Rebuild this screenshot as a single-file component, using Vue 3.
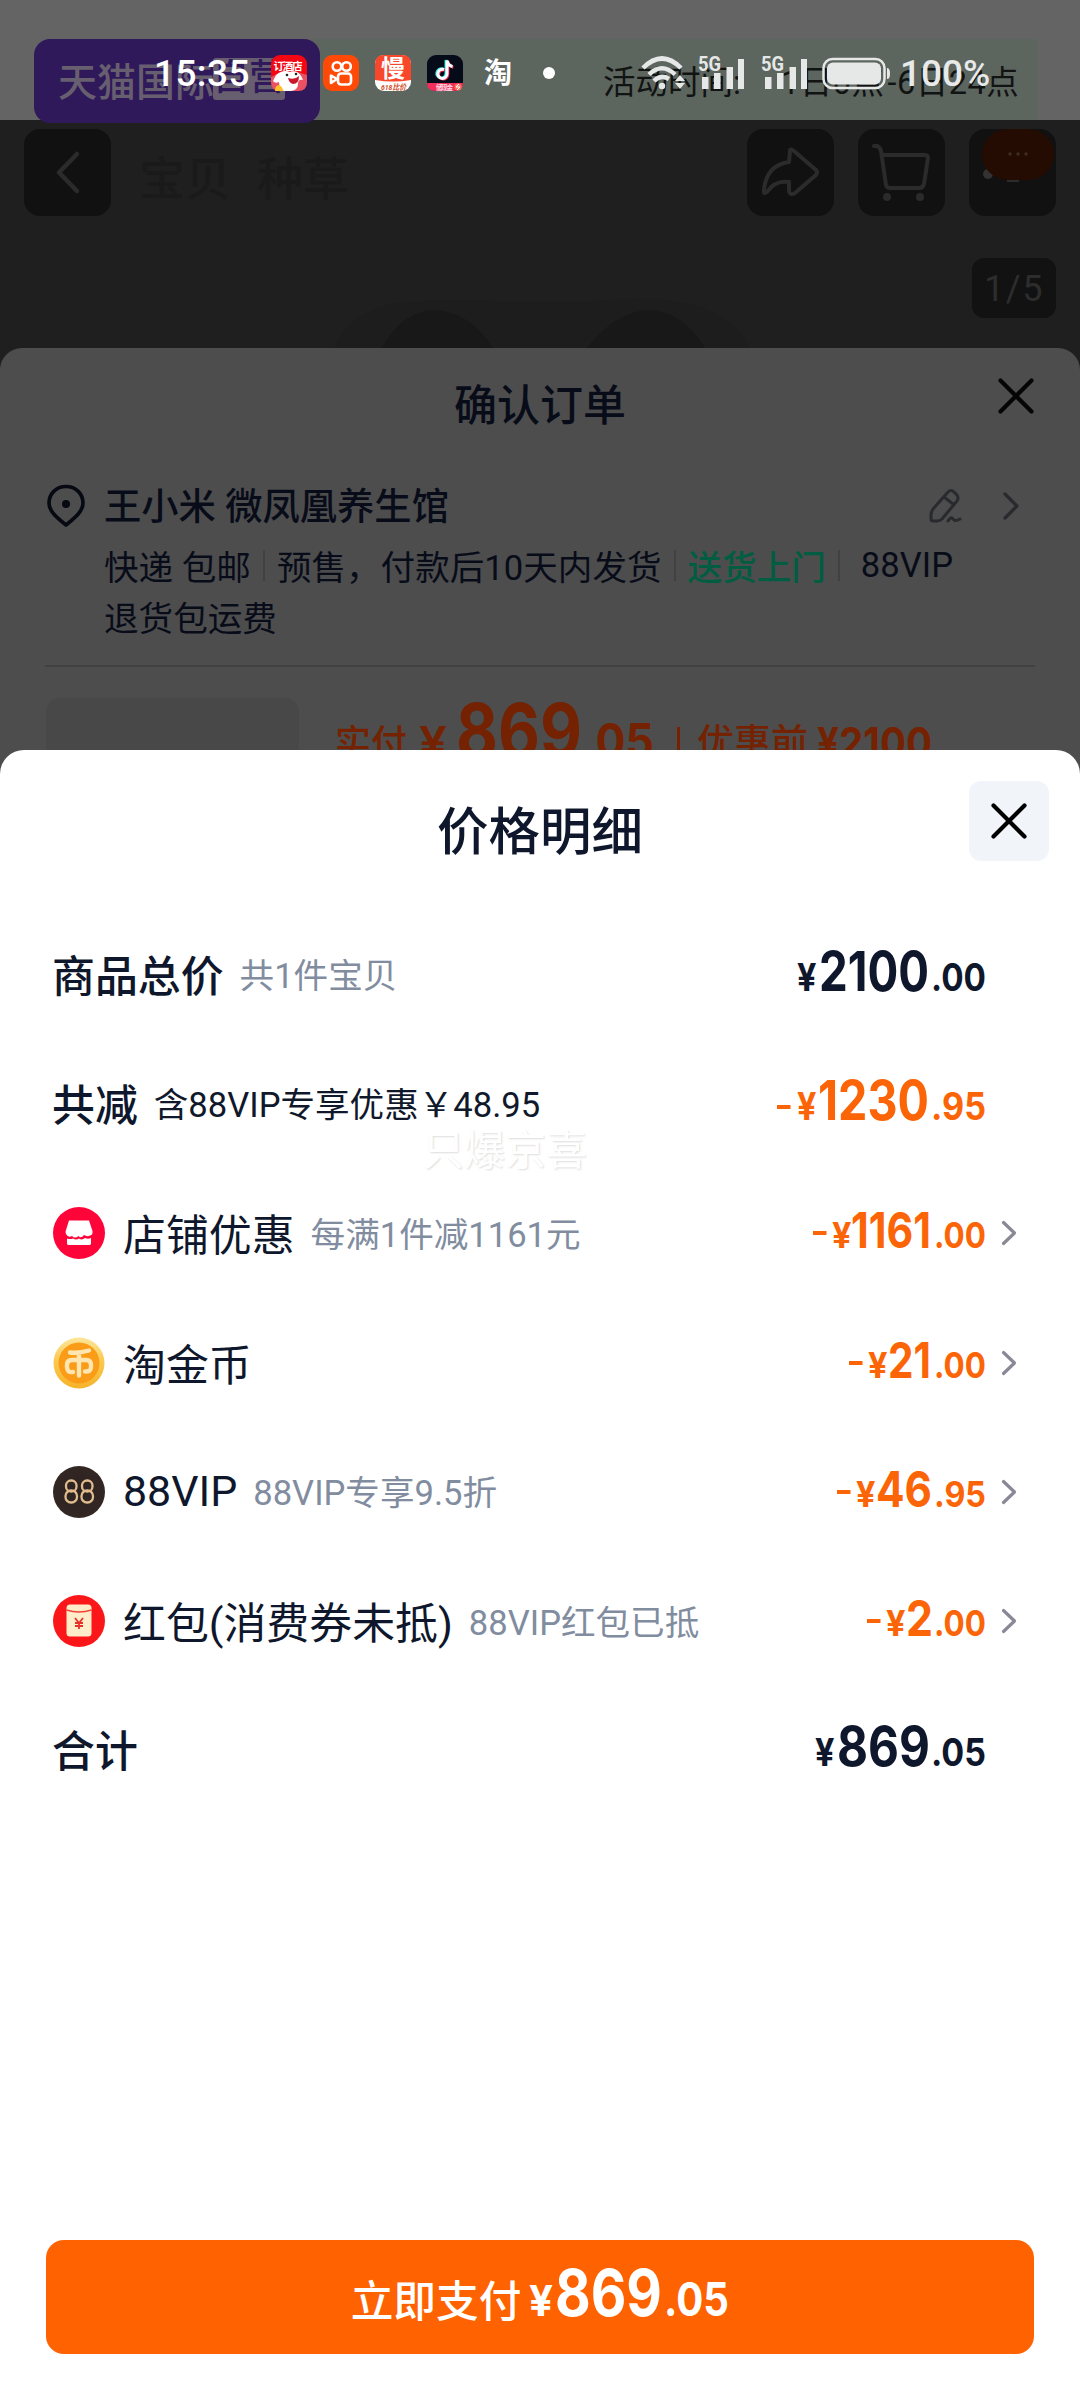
<script setup>
const rows = [
  { label: '商品总价', note: '共1件宝贝', strong: true, big: true, parts: { yen: 48, int: ['2100', 69, 110], dec: '.00' } },
  { label: '共减', note: '含88VIP专享优惠￥48.95', strong: true, dark: true, big: true, orange: true, parts: { minus: 27, yen: 48, int: ['1230', 68, 111], dec: '.95' } },
  { icon: 'shop', label: '店铺优惠', note: '每满1件减1161元', orange: true, arrow: true, parts: { minus: 63, yen: 83, int: ['1161', 101, 80], dec: '.00' } },
  { icon: 'coin', label: '淘金币', note: '', orange: true, arrow: true, parts: { minus: 99, yen: 119, int: ['21', 138, 43], dec: '.00' } },
  { icon: 'vip', label: '88VIP', note: '88VIP专享9.5折', orange: true, arrow: true, parts: { minus: 87, yen: 107, int: ['46', 126, 56], dec: '.95' } },
  { icon: 'red', label: '红包(消费券未抵)', note: '88VIP红包已抵', orange: true, arrow: true, parts: { minus: 117, yen: 137, int: ['2', 156, 27], dec: '.00' } },
  { label: '合计', note: '', strong: true, big: true, parts: { yen: 66, int: ['869', 87, 93], dec: '.05' } },
]
</script>

<template>
  <div class="screen">
    <div class="banner">
      <div class="brand"><span>天猫国际</span><b>自营</b></div>
      <div class="period"><span>活动时间:</span><span class="p1">1日0点</span><span class="p2">-6日24点</span></div>
    </div>
    <div class="product">
      <div class="nav">
        <div class="navbtn">
          <svg width="87" height="87"><path d="M53 25 35 43.500 53 62" fill="none" stroke="#2b2b2b" stroke-width="4.500" stroke-linecap="round" stroke-linejoin="round" /></svg>
        </div>
        <div class="tabs"><span>宝贝</span><span>种草</span></div>
        <div class="navbtn">
          <svg width="87" height="87"><path d="M43 22Q43 19 47 22L69 41Q71 43 69 46L48 64Q43 67 42 62V53Q28 51 20 63Q16 66 17 60Q20 36 42 33Z" fill="none" stroke="#2b2b2b" stroke-width="4" stroke-linejoin="round" /></svg>
        </div>
        <div class="navbtn">
          <svg width="87" height="87"><g fill="none" stroke="#2b2b2b" stroke-width="4" stroke-linecap="round" stroke-linejoin="round"><path d="M16 17H19Q22 18 23 22L28 56Q29 59 32 59H61Q65 59 66 55L70 29Q70 26 66 26H25" /></g><circle cx="29" cy="68" r="4" fill="#2b2b2b" /><circle cx="62" cy="68" r="4" fill="#2b2b2b" /></svg>
        </div>
        <div class="navbtn">
          <svg width="87" height="87"><circle cx="19" cy="45" r="5" fill="#333" /><path d="M38 51h12v2h-12z" fill="#2c2c2c" /><rect x="13" y="0" width="72" height="51" rx="25.500" fill="#240c03" /><g fill="#3f2c25"><circle cx="41" cy="25" r="1.700" /><circle cx="49" cy="25" r="1.700" /><circle cx="57" cy="25" r="1.700" /></g></svg>
        </div>
      </div>
      <div class="counter">1/5</div>
      <svg class="photo" width="440" height="52">
        <path d="M10 52Q22 18 70 7Q120 2 170 5H270Q330 -1 370 9Q415 24 425 52Z" fill="#1d1d1d" />
        <path d="M57 52Q78 14 110 14Q145 16 168 52ZM262 52Q292 14 326 14Q358 16 380 52Z" fill="#181818" />
      </svg>
    </div>

    <div class="statusbar">
      <div class="st-left">
        <span class="time">15:35</span>
        <svg class="app" viewBox="0 0 36 36"><rect width="36" height="36" rx="9" fill="#f30713" /><path d="M0 22Q18 12 36 20V27Q36 36 27 36H9Q0 36 0 27Z" fill="#ea5264" /><text x="2.500" y="14.500" font-size="10.500" font-weight="700" fill="#fff" textLength="29">订酒店</text><path d="M5 20Q12 14 19 17Q28 14 32 25Q27 24 27 29Q27 35 20 36H13Q8 34 8 27Q4 29 2 26Z" fill="#fff" /><path d="M17 23Q24 25 28 21Q28 29 22 29Q18 28 17 23Z" fill="#c9182b" /><circle cx="16" cy="20" r="1.300" fill="#222" /><circle cx="25" cy="19" r="1.300" fill="#222" /><path d="M4 36Q4 30 8 30Q12 32 12 36Z" fill="#ffbf27" /></svg>
        <svg class="app" viewBox="0 0 36 36"><rect width="36" height="36" rx="9" fill="#ff4906" /><g fill="none" stroke="#fff" stroke-width="2.600"><circle cx="14" cy="11.500" r="4.300" /><circle cx="23.500" cy="11.500" r="4.300" /><rect x="15" y="18.500" width="13" height="11" rx="3" /><path d="M14 24 8 20.500V28Z" stroke-linejoin="round" /></g></svg>
        <svg class="app" viewBox="0 0 36 36"><rect width="36" height="36" rx="9" fill="#fff" /><path d="M0 25V9Q0 0 9 0H27Q36 0 36 9V25Q18 28 0 25Z" fill="#f8472b" /><text x="6" y="22" font-size="24" font-weight="700" fill="#fff">慢</text><text x="6" y="34.500" font-size="8" font-weight="700" font-style="italic" fill="#d04a22" textLength="25" lengthAdjust="spacingAndGlyphs">618比价</text></svg>
        <svg class="app" viewBox="0 0 36 36"><rect width="36" height="36" rx="9" fill="#050b18" /><g fill="none" stroke-width="3"><path d="M17 14.500a4.600 4.600 0 1 0 3 4.300V5.500q1 5 5.500 6" stroke="#27e6e2" transform="translate(-1 -.5)" /><path d="M17 14.500a4.600 4.600 0 1 0 3 4.300V5.500q1 5 5.500 6" stroke="#fb2a59" transform="translate(.8 .7)" /><path d="M17 14.500a4.600 4.600 0 1 0 3 4.300V5.500q1 5 5.500 6" stroke="#fff" /></g><path d="M0 28H36Q36 36 27 36H9Q0 36 0 28Z" fill="#f32e5d" /><text x="9" y="35" font-size="6.500" font-weight="700" fill="#ffd9e0" textLength="17">储现金</text><circle cx="31" cy="32" r="3.500" fill="#ff765f" /><path d="m32 29-3 3h4l-3 3" stroke="#fff" fill="none" /></svg>
        <span class="tao">淘</span>
        <i class="dot"></i>
      </div>
      <div class="st-right">
        <svg width="46" height="36" viewBox="0 0 46 36"><g fill="none" stroke="#e6e8e7" stroke-width="4.500"><path d="M2 13Q21 -6 40 13" /><path d="M8 19.500Q21 7 34 19.500" /><path d="M13 26Q20 19 28 24" /></g><circle cx="21" cy="31" r="3.200" fill="#e6e8e7" /><path d="m39 20 5 6H34ZM39 34l5-6H34Z" fill="#e6e8e7" /></svg>
        <svg v-for="n in 2" :key="n" class="signal" width="50" height="36" viewBox="0 0 50 36"><text x="0" y="16" font-size="21" font-weight="700" fill="#e6e8e7" textLength="23" lengthAdjust="spacingAndGlyphs">5G</text><path d="M4 22h6.500v12H4zM16 18h6.500v16H16zM28.500 12H35v22h-6.500zM40 4h6v30h-6z" fill="#e6e8e7" /></svg>
        <svg class="battery" width="70" height="36" viewBox="0 0 70 36"><rect x="1.500" y="4" width="61" height="29" rx="9" fill="none" stroke="#e6e8e7" stroke-width="2.500" /><rect x="5" y="7.500" width="54" height="22" rx="6" fill="#e6e8e7" /><path d="M65 13q3 0 3 5.500t-3 5.500z" fill="#e6e8e7" /></svg>
        <span class="pct">100%</span>
      </div>
    </div>

    <section class="order">
      <header class="order-head">
        <h2>确认订单</h2>
        <svg class="order-close" width="40" height="40"><path d="M4.500 4.500 35.500 35.500M35.500 4.500 4.500 35.500" stroke="#050505" stroke-width="4.200" stroke-linecap="round" /></svg>
      </header>
      <div class="address">
        <svg width="40" height="44"><path d="M20 2.500C10 2.500 3 10 3 19C3 27 10 33 20 41C30 33 37 27 37 19C37 10 30 2.500 20 2.500Z" fill="none" stroke="#060812" stroke-width="3.600" stroke-linejoin="round" /><circle cx="20" cy="20" r="4" fill="#060812" /></svg>
        <span class="who">王小米 微凤凰养生馆</span>
        <svg class="pen" width="34" height="36"><g fill="none" stroke="#292a2e" stroke-width="3" stroke-linejoin="round" stroke-linecap="round"><path d="M19 4Q22 1 25 4L28 7Q30 10 28 13L13 31Q11 33 8 33H4Q2 33 2 31V27Q2 24 4 21ZM15 9 24 16" /><path d="M19 33Q22 28 24 31T31 31" /></g></svg>
        <svg width="20" height="30"><path d="M4 3 16 15 4 27" fill="none" stroke="#292a2e" stroke-width="3.200" stroke-linecap="round" stroke-linejoin="round" /></svg>
      </div>
      <div class="ship"><span>快递 包邮</span><i></i><span>预售，付款后10天内发货</span><i class="i2"></i><b>送货上门</b><i class="i3"></i><span class="v">88VIP</span></div>
      <div class="ship second">退货包运费</div>
      <hr />
      <div class="goods">
        <div class="thumb"></div>
        <svg class="paid" width="640" height="70">
          <g fill="#742202" font-weight="500">
            <text x="9" y="58" font-size="36">实付</text>
            <text x="93" y="60" font-size="44" font-weight="600" class="din" textLength="28" lengthAdjust="spacingAndGlyphs">¥</text>
            <text x="130" y="60" font-size="75" font-weight="700" class="din" textLength="126" lengthAdjust="spacingAndGlyphs">869</text>
            <text x="256" y="60" font-size="48" font-weight="700" class="din" textLength="72" lengthAdjust="spacingAndGlyphs">.05</text>
            <path d="M351 29h3v38h-3z" />
            <text x="371" y="58" font-size="37">优惠前</text>
            <text x="491" y="60" font-size="43" font-weight="700" class="din" textLength="115" lengthAdjust="spacingAndGlyphs">¥2100</text>
          </g>
        </svg>
      </div>
    </section>

    <section class="detail">
      <header class="detail-head">
        <h1>价格明细</h1>
        <button><svg width="40" height="40"><path d="M4.500 4.500 35.500 35.500M35.500 4.500 4.500 35.500" stroke="#000" stroke-width="4.200" stroke-linecap="round" /></svg></button>
      </header>
      <ul>
        <li v-for="r in rows" :key="r.label">
          <svg v-if="r.icon === 'shop'" class="icon" viewBox="0 0 52 52"><circle cx="26" cy="26" r="26" fill="#ff0438" /><path d="M16 13.500H36L39.500 24Q40 28 37 28.500Q34 30 31 28Q28 32 25.500 29Q22 32 19 29Q15 31 13 27Q12 25 13 23Z" fill="#fff" /><path d="M14 31.500Q17 32.500 20 31.500Q23 33.500 26 31.500Q29 33.500 32 31Q35 32.500 38 31V36.500Q38 38 36 38H16Q14 38 14 36.500Z" fill="#fff" /></svg>
          <svg v-else-if="r.icon === 'coin'" class="icon" viewBox="0 0 52 52"><defs><linearGradient id="rim" x2="0" y2="1"><stop stop-color="#fde69a" /><stop offset=".45" stop-color="#fbc94f" /><stop offset="1" stop-color="#f6b32b" /></linearGradient></defs><circle cx="26" cy="26" r="25.500" fill="url(#rim)" /><circle cx="26" cy="26" r="20.500" fill="#fa9c18" /><g fill="none" stroke="#ffe5b0" stroke-width="4.400" stroke-linecap="round" stroke-linejoin="round"><path d="M17 15.500Q26 16.500 36 13.500M26 16V38.500M20 35Q14 36 14 30V28Q14 23 19 23H33Q38 23 38 28V30Q38 35 32 34.500" /></g></svg>
          <svg v-else-if="r.icon === 'vip'" class="icon" viewBox="0 0 52 52"><defs><radialGradient id="dark"><stop stop-color="#2a2120" /><stop offset="1" stop-color="#332724" /></radialGradient></defs><circle cx="26" cy="26" r="26" fill="url(#dark)" /><g fill="none" stroke="#dfbb8d" stroke-width="2.300"><rect x="13" y="14.500" width="10.500" height="11" rx="5" /><rect x="12.500" y="24.500" width="11.500" height="12" rx="5.500" /><rect x="29" y="14.500" width="10.500" height="11" rx="5" /><rect x="28.500" y="24.500" width="11.500" height="12" rx="5.500" /></g></svg>
          <svg v-else-if="r.icon === 'red'" class="icon" viewBox="0 0 52 52"><circle cx="26" cy="26" r="26" fill="#fb1719" /><rect x="13.500" y="9.500" width="25" height="32" rx="3.500" fill="#ffecc8" /><path d="M13.500 15Q26 19 38.500 15" fill="none" stroke="#f04436" stroke-width="1.400" /><path d="m22 23 4 5 4-5M26 28v6M22 28h8M22 31h8" stroke="#e5332a" stroke-width="1.800" fill="none" /></svg>
          <span class="label" :class="{ strong: r.strong }">{{ r.label }}</span>
          <span class="note" :class="{ dark: r.dark }">{{ r.note }}</span>
          <svg class="price" :class="{ orange: r.orange }" width="240" height="70">
            <rect v-if="r.parts.minus" :x="r.parts.minus" :y="r.big ? 36 : 33" width="13.500" height="4" />
            <text :x="r.parts.yen - 1" :y="r.big ? 51 : 49.500" :font-size="r.big ? 38 : 36" font-weight="700" textLength="19.500" lengthAdjust="spacingAndGlyphs">¥</text>
            <text :x="r.parts.int[1]" :y="r.big ? 51 : 49.500" :font-size="r.big ? 55 : 50" font-weight="700" :textLength="r.parts.int[2]" lengthAdjust="spacingAndGlyphs">{{ r.parts.int[0] }}</text>
            <text :x="r.big ? 181 : 184" :y="r.big ? 51 : 49.500" :font-size="r.big ? 38 : 36" font-weight="700" :textLength="r.big ? 55 : 52" lengthAdjust="spacingAndGlyphs">{{ r.parts.dec }}</text>
          </svg>
          <svg class="chev" width="20" height="30"><path v-if="r.arrow" d="M3.500 4.500 14.500 15 3.500 25.500" fill="none" stroke="#888995" stroke-width="3.200" stroke-linecap="round" stroke-linejoin="round" /></svg>
        </li>
      </ul>
      <button class="pay">
        <span>立即支付</span>
        <svg width="208" height="70">
          <g fill="#fff"><text x="8" y="54" font-size="43" font-weight="700" textLength="24" lengthAdjust="spacingAndGlyphs">¥</text>
          <text x="34" y="54" font-size="64" font-weight="700" textLength="107" lengthAdjust="spacingAndGlyphs">869</text>
          <text x="143" y="54" font-size="46" font-weight="700" textLength="65" lengthAdjust="spacingAndGlyphs">.05</text></g>
        </svg>
      </button>
      <span class="watermark">只爆京喜</span>
    </section>
  </div>
</template>

<style>
body { margin: 0; background: #1f1f1f; }
</style>

<style scoped>
* { box-sizing: border-box; }
.screen { position: relative; width: 1080px; height: 2400px; overflow: hidden; background: #1f1f1f; font-family: Roboto, "Noto Sans CJK SC", sans-serif; }
svg { display: block; flex: none; overflow: visible; }
h1, h2, ul { margin: 0; padding: 0; }
button { border: 0; padding: 0; font-family: inherit; }
.banner { height: 120px; padding: 39px 43px 0 34px; display: flex; background: #646464; }
.brand { width: 286px; height: 84px; flex: none; border-radius: 16px; background: #30195a; display: flex; align-items: center; padding: 0 0 4px 24px; font-size: 39px; font-weight: 500; color: #675f70; position: relative; z-index: 1; }
.brand b { font-weight: 500; background: #675f70; color: #30195a; height: 42px; line-height: 40px; font-size: 36px; border-radius: 3px; }
.brand span { width: 155px; white-space: nowrap; }
.period { flex: 1; margin-left: -10px; height: 81px; background: #5d655f; padding: 0 0 0 293px; display: flex; align-items: center; font-size: 32.500px; color: #111412; white-space: nowrap; }
.p1 { margin-left: 40px; letter-spacing: .5px; }
.p2 { margin-left: 3px; letter-spacing: .5px; }
.product { height: 228px; display: flex; flex-direction: column; }
.nav { display: flex; align-items: center; padding: 9px 24px 0; gap: 24px; }
.navbtn { width: 87px; height: 87px; border-radius: 16px; background: #111; flex: none; }
.tabs { flex: 1; display: flex; gap: 26px; padding: 12px 0 0 4px; line-height: 68px; font-size: 46px; font-weight: 500; color: #1a1a1a; }
.counter { align-self: flex-end; width: 84px; height: 60px; margin: 42px 24px 0 0; border-radius: 12px; background: #121212; color: #2d2d2d; font-size: 36px; line-height: 63px; text-align: center; letter-spacing: 1.500px; }
.photo { margin: -22px 0 0 325px; }
.statusbar { position: absolute; inset: 0 0 auto 0; height: 120px; padding: 26px 90px 0 154px; display: flex; justify-content: space-between; align-items: center; z-index: 2; }
.st-left, .st-right { display: flex; align-items: center; }
.time { font-size: 37px; font-weight: 500; color: #fff; width: 101px; letter-spacing: .4px; }
.app { width: 36px; height: 36px; margin-left: 16px; }
.tao { margin: -5px 0 0 21px; font-size: 28px; font-weight: 700; color: #fff; }
.dot { width: 12px; height: 12px; border-radius: 6px; background: #fff; margin-left: 31px; }
.signal { margin-left: 11px; }
.signal + .signal { margin-left: 13px; }
.battery { margin-left: 11px; }
.pct { margin-left: 8px; font-size: 37px; font-weight: 500; color: #e8eae9; width: 90px; }
.order { position: absolute; inset: 348px 0 0 0; background: #4d4d4d; border-radius: 22px 22px 0 0; color: #080c19; z-index: 3; }
.order-head { display: flex; justify-content: center; height: 114px; padding-top: 26px; position: relative; }
.order-head h2 { font-size: 43px; font-weight: 500; line-height: 64px; }
.order-close { position: absolute; right: 44px; top: 28px; }
.address { display: flex; align-items: center; height: 60px; padding: 0 59px 0 46px; margin-top: 14px; }
.who { flex: 1; margin: -5px 0 0 18px; font-size: 37.300px; font-weight: 500; }
.pen { margin-right: 38px; }
.ship { display: flex; align-items: center; height: 52px; margin-top: 3px; padding-left: 104px; font-size: 34.600px; white-space: nowrap; }
.ship.second { margin-top: -1px; }
.ship i { width: 2px; height: 31px; background: #414141; margin: 0 12px 0 12px; }
.ship b { font-weight: 500; color: #005d42; }
.ship .v { margin-left: 9px; }
hr { border: 0; height: 2px; background: #414141; margin: 23px 45px 0; }
.goods { display: flex; padding: 31px 0 0 46px; }
.thumb { width: 253px; height: 253px; border-radius: 14px; background: #484848; }
.paid { margin-left: 27px; }
.din, .price text, .pay text { font-family: Inter, Roboto, sans-serif; }
.detail { position: absolute; inset: 750px 0 0 0; background: #fff; border-radius: 24px 24px 0 0; color: #0e172b; z-index: 4; }
.detail-head { position: relative; display: flex; justify-content: center; height: 160px; padding-top: 45px; }
h1 { font-size: 51.500px; line-height: 76px; font-weight: 500; }
.detail-head button { position: absolute; right: 31px; top: 31px; width: 80px; height: 80px; border-radius: 12px; background: #f1f5f9; display: grid; place-items: center; }
ul { list-style: none; }
li { display: flex; align-items: center; height: 129.300px; padding: 0 61px 0 53px; }
.icon { width: 52px; height: 52px; margin-right: 18px; }
.label { font-size: 42.900px; white-space: nowrap; margin-top: -2px; }
.label.strong { font-weight: 500; margin: -4px 0 0 -1px; }
.note { margin: -3px 0 0 16px; font-size: 34.600px; color: #818d9f; white-space: nowrap; flex: 1; }
.note.dark { color: #10182b; }
.price { fill: #0e172b; }
.price.orange { fill: #fb6507; }
.chev { margin-left: 10px; margin-right: -1px; }
.pay { display: flex; align-items: center; justify-content: center; width: 988px; height: 114px; margin: 425px 0 0 46px; border-radius: 18px; background: #ff6200; color: #fff; }
.pay span { font-size: 42.700px; font-weight: 500; margin-top: 1px; }
.watermark { position: absolute; left: 423px; top: 367px; font-size: 41px; color: #fff; text-shadow: 1px 1px 2px #ddd; }
</style>
